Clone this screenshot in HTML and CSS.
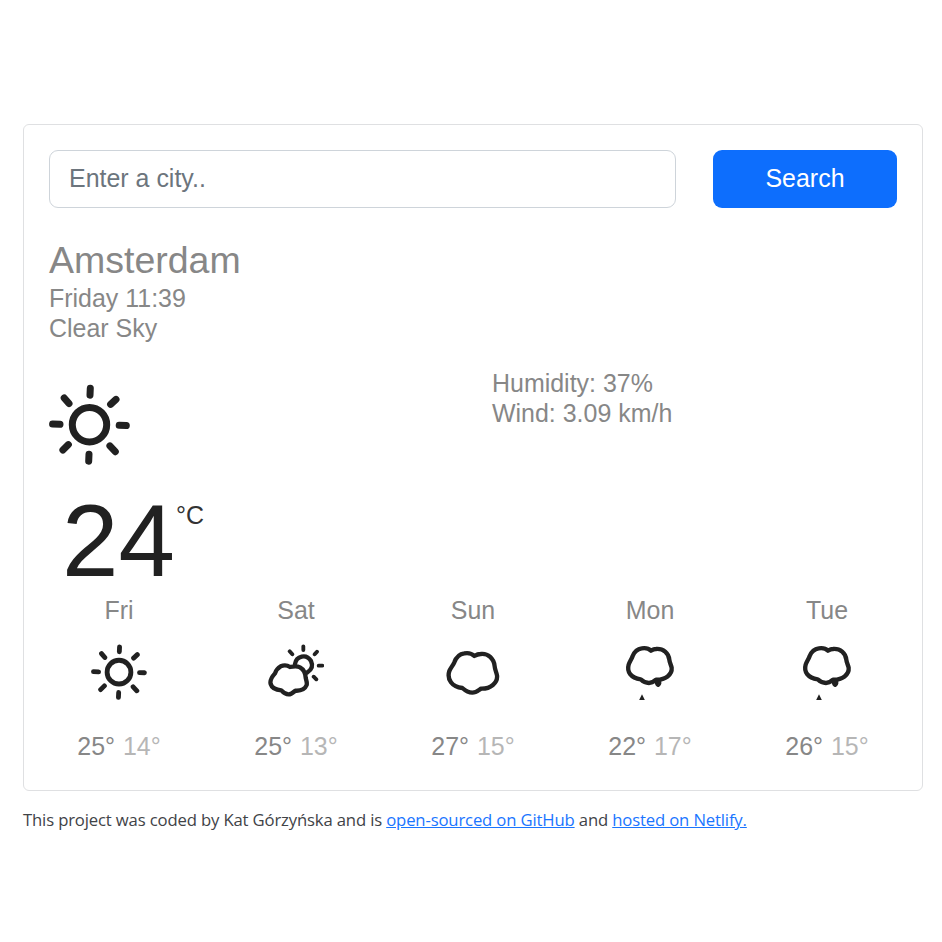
FILE: index.html
```html
<!DOCTYPE html>
<html lang="en">
<head>
<meta charset="utf-8">
<title>Weather</title>
<link rel="stylesheet" href="styles.css">
</head>
<body>
<svg class="defs" aria-hidden="true">
  <symbol id="sun" viewBox="0 0 81 81">
    <circle cx="40.5" cy="40.7" r="17.2"/>
    <path d="M41.3 4.2L41 11.2M67 15.4L61.6 20.4M70.2 41.3L77.3 41.6M60.9 61.9L66.3 67.7M40 70.2L39.7 77.2M19.4 60.6L13.9 66M3.6 40L11 40.3M15.2 13.9L20 19.6"/>
  </symbol>
  <symbol id="rain" viewBox="66 162 168 168">
    <path d="M153 182C146 175 136 173 125 175C112 177 103 186 98 198C95 207 89 215 86 224C80 245 92 264 122 268C129 275 138 279 147 279C156 279 161 275 168 269C196 270 217 254 215 233C213 224 209 219 208 209C206 190 190 175 168 177C163 177 158 179 153 182Z"/>
    <path class="fill" d="M164 269L184 266L184 281Q180 291 173 291Q165 288 164 276ZM126 313L135 331H117Z"/>
  </symbol>
</svg>
<main class="card">
  <form class="search">
    <input class="city-input" type="text" placeholder="Enter a city.." aria-label="City">
    <button class="search-button" type="button">Search</button>
  </form>
  <h1 class="city">Amsterdam</h1>
  <div class="summary">Friday 11:39<br>Clear Sky</div>
  <section class="current">
    <div class="now">
      <svg class="icon icon-large"><use href="#sun"/></svg>
      <div class="temperature"><span class="degrees">24</span><span class="unit">°C</span></div>
    </div>
    <div class="details">Humidity: 37%<br>Wind: 3.09 km/h</div>
  </section>
  <section class="forecast">
    <div class="day">
      <div>Fri</div>
      <svg class="icon icon-sun"><use href="#sun"/></svg>
      <div>25° <span class="low">14°</span></div>
    </div>
    <div class="day">
      <div>Sat</div>
      <svg class="icon" viewBox="54 162 168 168">
        <path d="M120 231C111 225 101 225 92 229C83 234 78 241 75 250C65 261 59 271 62 282C66 295 80 300 94 301C101 309 108 313 116 313C124 313 130 307 136 302C152 303 165 297 170 285C172 277 168 270 167 263C166 248 161 238 150 232C140 227 130 229 120 231Z"/>
        <path d="M135 222C139 198 169 190 183 213C190 228 184 240 171 248"/>
        <path class="rays" d="M160 169V180M201 185L194 193M206 227H217M191 260L199 268M119 184L127 193"/>
      </svg>
      <div>25° <span class="low">13°</span></div>
    </div>
    <div class="day">
      <div>Sun</div>
      <svg class="icon" viewBox="60 162 168 168">
        <path d="M148 198C140 190 129 188 118 190C103 192 93 203 88 217C84 226 77 234 73 243C65 268 81 291 112 294C122 303 130 308 142 308C153 308 159 302 168 296C196 297 219 279 216 256C214 246 210 240 209 229C207 206 189 189 167 192C159 192 153 195 148 198Z"/>
      </svg>
      <div>27° <span class="low">15°</span></div>
    </div>
    <div class="day">
      <div>Mon</div>
      <svg class="icon icon-rain"><use href="#rain"/></svg>
      <div>22° <span class="low">17°</span></div>
    </div>
    <div class="day">
      <div>Tue</div>
      <svg class="icon icon-rain"><use href="#rain"/></svg>
      <div>26° <span class="low">15°</span></div>
    </div>
  </section>
</main>
<footer class="credits">This project was coded by Kat Górzyńska and is <a href="#">open-sourced on GitHub</a> and <a href="#">hosted on Netlify.</a></footer>
</body>
</html>
```
FILE: styles.css
```css
* { box-sizing: border-box; }
body {
  margin: 0;
  padding: 124px 19px 0 23px;
  background: #fff;
  color: #878787;
  font: 24.96px/29.5px "Liberation Sans", Arial, sans-serif;
}
.defs { display: none; }
.card {
  height: 667px;
  padding: 25px;
  border: 1px solid #dfe0e2;
  border-radius: 6px;
}
.search { display: flex; gap: 37px; }
.city-input {
  width: 627px;
  height: 58px;
  padding: 0 19px 2px;
  border: 1px solid #ced4da;
  border-radius: 9px;
  font: inherit;
}
.city-input::placeholder { color: #6c757d; opacity: 1; }
.search-button {
  flex: 1;
  height: 58px;
  padding: 0;
  border: 0;
  border-radius: 9px;
  background: #0d6efd;
  color: #fff;
  font: inherit;
}
.city {
  margin: 29px 0 0;
  font-size: 37.5px;
  font-weight: 400;
  line-height: 47px;
}
.current { display: flex; margin-top: 26px; }
.now { width: 443px; padding-top: 15px; }
.icon {
  display: block;
  width: 56px;
  height: 56px;
  fill: none;
  stroke: #212121;
  stroke-width: 13;
  stroke-linecap: round;
  stroke-linejoin: round;
}
.icon-large, .icon-sun { stroke-width: 7; }
.icon-large { width: 81px; height: 81px; }
.fill { fill: #212121; stroke: none; }
.rays { stroke-width: 11.5; }
.temperature {
  display: flex;
  height: 124px;
  padding-left: 13px;
  color: #212121;
}
.degrees { font-size: 101.5px; line-height: 152px; }
.unit { padding: 36px 0 0 1px; color: #333; }
.forecast { display: flex; margin: 7px -18px 0 -19px; }
.day {
  display: flex;
  width: 177px;
  flex-direction: column;
  align-items: center;
  gap: 18px;
}
.day > div { margin-left: 1px; }
.day .icon { margin-bottom: 14px; }
.low { margin-left: 1px; opacity: .6; }
.credits {
  margin-top: 15px;
  color: #3f4347;
  font: 16.7px/28px "Open Sans", "Noto Sans", sans-serif;
  letter-spacing: -.155px;
}
.credits a { color: #1a75ff; }
```
